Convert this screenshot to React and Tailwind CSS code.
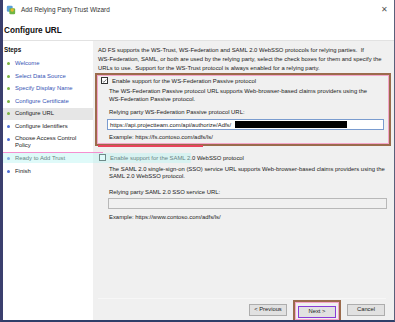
const font = { fontFamily: '"Liberation Sans", Arial, sans-serif' };

const steps = [
  { label: 'Welcome', done: true },
  { label: 'Select Data Source', done: true },
  { label: 'Specify Display Name', done: true },
  { label: 'Configure Certificate', done: true },
  { label: 'Configure URL', current: true },
  { label: 'Configure Identifiers' },
  { label: ['Choose Access Control', 'Policy'] },
  { label: 'Ready to Add Trust' },
  { label: 'Finish' },
];

function Step({ step }) {
  const bullet = step.done || step.current ? 'bg-[#7cb342]' : 'bg-[#4f6fd6]';
  const text = step.done ? 'text-[#3653b5]' : 'text-[#1a1a1a]';
  const lines = Array.isArray(step.label) ? step.label : [step.label];
  const multi = lines.length > 1;
  return (
    <div className={`flex pl-[4px] ${multi ? 'h-[20px] pt-[2.5px] items-start' : 'h-[12.5px] items-center'} ${step.current ? 'bg-[#e6e6e6]' : ''}`}>
      <span className={`w-[3px] h-[3px] rounded-full ${bullet} shrink-0 ${multi ? 'mt-[2.5px]' : ''}`} />
      <span className={`ml-[5px] text-[5.9px] leading-[7px] ${text}`}>
        {lines.map((l) => (
          <span key={l} className="block">{l}</span>
        ))}
      </span>
    </div>
  );
}

function Checkbox({ checked }) {
  return (
    <span className="w-[7px] h-[7px] border border-[#333] bg-white flex items-center justify-center shrink-0">
      {checked && (
        <svg viewBox="0 0 8 8" className="w-[6px] h-[6px]">
          <path d="M1 4.2 L3 6 L7 1.5" fill="none" stroke="#222" strokeWidth="1" />
        </svg>
      )}
    </span>
  );
}

function Button({ children, primary }) {
  return (
    <div
      className={`h-[12px] w-[38px] flex items-center justify-center text-[5.8px] leading-none text-[#222] bg-[#e1e1e1] border ${
        primary ? 'border-[#8a3cd6] border-[1.5px]' : 'border-[#adadad]'
      }`}
    >
      {children}
    </div>
  );
}

export default function App() {
  return (
    <div style={font} className="w-[395px] h-[322px] relative bg-white overflow-hidden flex flex-col border-l-[3px] border-l-[#3b3f6e] border-b-[2px] border-b-[#2f3f6a] border-r border-r-[#5a5f7a]">
      {/* title bar */}
      <div className="h-[20px] flex items-center pl-[3px] pr-[6px] shrink-0">
        <svg viewBox="0 0 12 12" className="w-[10px] h-[10px]">
          <rect x="1" y="1" width="7" height="7" rx="1.5" fill="#5aa0d8" />
          <rect x="4" y="4" width="7" height="7" rx="1.5" fill="#6fb544" />
          <circle cx="7.5" cy="6" r="2" fill="#e6b830" />
        </svg>
        <span className="ml-[5px] text-[6.4px] leading-none text-[#333]">Add Relying Party Trust Wizard</span>
        <span className="ml-auto text-[8px] text-[#555] leading-none">✕</span>
      </div>
      {/* header */}
      <div className="h-[21px] flex items-center pl-[1px] pt-[2px] shrink-0 border-b border-[#e2e2e2]">
        <span className="text-[8.2px] leading-none font-bold text-[#111]">Configure URL</span>
      </div>

      <div className="flex flex-1 min-h-0">
        {/* steps */}
        <div className="w-[90px] shrink-0 bg-white pt-[3px]">
          <div className="text-[6.3px] leading-none font-bold text-[#111] pl-[1px] h-[12px] flex items-center">Steps</div>
          <div className="mt-[1.5px] flex flex-col">
            {steps.map((s, i) => (
              <Step key={i} step={s} />
            ))}
          </div>
        </div>

        {/* content */}
        <div className="flex-1 bg-[#f0f0f0] flex flex-col pl-[5px] pr-[8px] text-[5.9px] leading-[8px] text-[#222]">
          <div className="pt-[5px] leading-[8.8px]">
            <span className="block">AD FS supports the WS-Trust, WS-Federation and SAML 2.0 WebSSO protocols for relying parties.&nbsp; If</span>
            <span className="block">WS-Federation, SAML, or both are used by the relying party, select the check boxes for them and specify the</span>
            <span className="block">URLs to use.&nbsp; Support for the WS-Trust protocol is always enabled for a relying party.</span>
          </div>

          {/* WS-Federation */}
          <div className="mt-[0.5px] -ml-[3px] -mr-[5px] border-2 border-[#9b6b4c] outline outline-1 outline-[#f4a6c9] -outline-offset-[3px] px-[4px] pt-[2px] pb-[3px]">
            <div className="flex items-center gap-[4px] h-[8px]">
              <Checkbox checked />
              <span>Enable support for the WS-Federation Passive protocol</span>
            </div>
            <div className="pl-[8px] mt-[3.25px] leading-[7.5px]">
              <span className="block">The WS-Federation Passive protocol URL supports Web-browser-based claims providers using the</span>
              <span className="block">WS-Federation Passive protocol.</span>
            </div>
            <div className="pl-[8px] mt-[4.75px]">Relying party WS-Federation Passive protocol URL:</div>
            <div className="ml-[6px] mr-[1px] mt-[3.5px] h-[11px] bg-white border border-[#7a9ccf] flex items-center pl-[2px]">
              <span>https://api.projectteam.com/api/authorize/Adfs/</span>
              <span className="ml-[4px] w-[112px] h-[7px] bg-black" />
            </div>
            <div className="pl-[8px] mt-[2.5px]">Example: https://fs.contoso.com/adfs/ls/</div>
          </div>

          {/* SAML */}
          <div className="mt-[8px] pl-[1px]">
            <div className="flex items-center gap-[4px] h-[8px]">
              <Checkbox />
              <span>Enable support for the SAML 2.0 WebSSO protocol</span>
            </div>
            <div className="pl-[10px] mt-[3.75px] leading-[7.5px]">
              <span className="block">The SAML 2.0 single-sign-on (SSO) service URL supports Web-browser-based claims providers using the</span>
              <span className="block">SAML 2.0 WebSSO protocol.</span>
            </div>
            <div className="pl-[10px] mt-[7.25px]">Relying party SAML 2.0 SSO service URL:</div>
            <div className="ml-[9px] mr-[-1px] mt-[2.5px] h-[11px] bg-[#f0f0f0] border border-[#b8b8b8]" />
            <div className="pl-[10px] mt-[4px]">Example: https://www.contoso.com/adfs/ls/</div>
          </div>

          {/* buttons */}
          <div className="mt-auto border-t border-[#f7f7f7] h-[22px] flex items-center justify-end gap-[6px] pr-[1px]">
            <Button>&lt; Previous</Button>
            <div className="h-[22px] -mb-[2px] px-[3px] flex items-center border-2 border-[#9b6b4c] border-b-0 outline outline-1 outline-[#f4a6c9] -outline-offset-[3px]">
              <Button primary>Next &gt;</Button>
            </div>
            <Button>Cancel</Button>
          </div>
        </div>
      </div>

      {/* annotation marks drawn over the screenshot */}
      <div className="absolute left-[95px] top-[145px] w-[105px] h-[1.5px] bg-[#e8435c]" />
      <div className="absolute left-0 top-[152px] w-[100px] h-[1px] bg-[#f58fd0]" />
      <div className="absolute left-0 top-[153px] w-[188px] h-[10px] bg-[#b8f3f2]/45" />
    </div>
  );
}
